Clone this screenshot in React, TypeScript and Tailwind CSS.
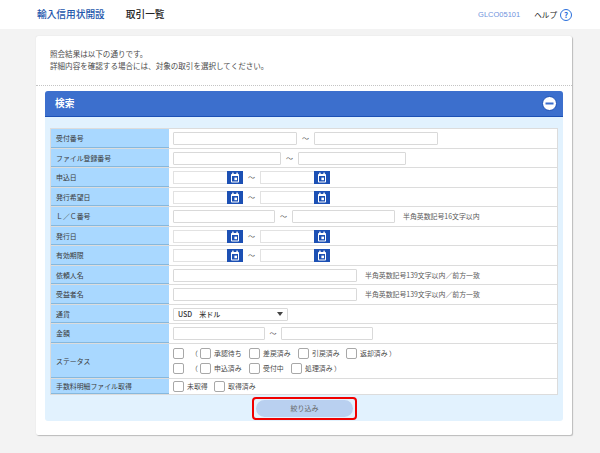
import React from "react";

const font = { fontFamily: '"Noto Sans CJK JP", "Noto Sans", sans-serif' };

function CalendarButton() {
  return (
    <span className="flex h-[13px] w-[16px] shrink-0 items-center justify-center bg-[#1c50b4]">
      <svg width="10" height="11" viewBox="0 0 10 11">
        <rect x="1" y="2" width="8" height="8.5" rx="0.8" fill="#fff" />
        <rect x="2.2" y="0.6" width="1.4" height="2.4" fill="#fff" />
        <rect x="6.4" y="0.6" width="1.4" height="2.4" fill="#fff" />
        <rect x="2" y="4" width="6" height="5.5" fill="#1c50b4" />
        <rect x="4.4" y="5.6" width="2.6" height="2.6" fill="#fff" />
      </svg>
    </span>
  );
}

function TextBox({ w }: { w: string }) {
  return <span className={`block h-[13px] shrink-0 rounded-[1px] border border-[#d9d9d9] bg-white ${w}`} />;
}

function Tilde({ w }: { w: string }) {
  return <span className={`shrink-0 text-center text-[7px] leading-none text-[#555] ${w}`}>～</span>;
}

function Note({ children }: { children: React.ReactNode }) {
  return <span className="ml-[8px] whitespace-nowrap text-[6.9px] text-[#5a5a5a]">{children}</span>;
}

function DateRange() {
  return (
    <>
      <span className="flex">
        <span className="block h-[13px] w-[54px] border border-r-0 border-[#e2e2e2] bg-white" />
        <CalendarButton />
      </span>
      <Tilde w="w-[17px]" />
      <span className="flex">
        <span className="block h-[13px] w-[54px] border border-r-0 border-[#e2e2e2] bg-white" />
        <CalendarButton />
      </span>
    </>
  );
}

function Check({ label, w }: { label?: string; w: string }) {
  return (
    <span className={`flex shrink-0 items-center ${w}`}>
      <span className="block h-[11px] w-[11px] shrink-0 rounded-[2px] border border-[#a8a8a8] bg-white" />
      {label && <span className="ml-[3px] whitespace-nowrap text-[6.9px] text-[#4a4a4a]">{label}</span>}
    </span>
  );
}

function Paren() {
  return <span className="w-[9px] shrink-0 text-[6.9px] text-[#4a4a4a]">（</span>;
}

function Row({
  label,
  h = "h-[20px]",
  children,
}: {
  label: string;
  h?: string;
  children: React.ReactNode;
}) {
  return (
    <div className={`flex border-b border-[#dcdcdc] last:border-b-0 ${h}`}>
      <div className="flex w-[118px] shrink-0 items-center whitespace-nowrap bg-[#a9d8ff] pl-[5px] text-[6.9px] text-[#3a3a3a] shadow-[inset_0_-1px_0_#86b8dd]">
        {label}
      </div>
      <div className="flex flex-1 items-center bg-white pl-[4px]">{children}</div>
    </div>
  );
}

export default function App() {
  return (
    <div className="h-[453px] w-[600px] overflow-hidden bg-[#f3f3f3]" style={font}>
      <div className="flex h-[29px] items-center bg-white pl-[37px] pr-[28px]">
        <h1 className="text-[9.7px] font-medium text-[#2457ac]">輸入信用状開設</h1>
        <p className="ml-[21px] text-[9.7px] font-medium text-[#222]">取引一覧</p>
        <span className="ml-auto text-[7.5px] text-[#6f93dd]" style={{ fontFamily: '"Liberation Sans", sans-serif' }}>
          GLCO05101
        </span>
        <span className="ml-[14px] text-[7.6px] text-[#222]">ヘルプ</span>
        <span className="ml-[3px] flex h-[12px] w-[12px] items-center justify-center rounded-full border border-[#2a6fdc] text-[8px] font-bold leading-none text-[#2a6fdc]">
          ?
        </span>
      </div>

      <div className="ml-[36px] mt-[7px] h-[399px] w-[536px] rounded-[2px] bg-white shadow-[1px_1px_1px_#bbb,0_0_1px_#ccc]">
        <div className="h-[50px] border-b border-dotted border-[#c4c4c4] pl-[14px] pt-[12px] text-[7.55px] leading-[12px] text-[#4a4a4a]">
          <p>照会結果は以下の通りです。</p>
          <p>詳細内容を確認する場合には、対象の取引を選択してください。</p>
        </div>

        <div className="ml-[9px] mt-[5px] h-[330px] w-[518px] rounded-[3px] bg-[#e2f2fe]">
          <div className="flex h-[26px] items-center justify-between rounded-t-[3px] border-b border-[#1c50b4] bg-[#3c6fcd] pl-[10px] pr-[6px]">
            <span className="text-[9.7px] font-bold text-white">検索</span>
            <svg width="15" height="15" viewBox="0 0 15 15">
              <circle cx="7.5" cy="7.5" r="7" fill="#fff" stroke="#1c50b4" />
              <rect x="3.5" y="6.5" width="8" height="2" fill="#3c6fcd" />
            </svg>
          </div>

          <div className="mx-[5px] mt-[11px] w-[508px] border border-[#dcdcdc] bg-white">
            <Row label="受付番号">
              <TextBox w="w-[124px]" />
              <Tilde w="w-[17px]" />
              <TextBox w="w-[124px]" />
            </Row>
            <Row label="ファイル登録番号" h="h-[19px]">
              <TextBox w="w-[108px]" />
              <Tilde w="w-[17px]" />
              <TextBox w="w-[108px]" />
            </Row>
            <Row label="申込日">
              <DateRange />
            </Row>
            <Row label="発行希望日" h="h-[19px]">
              <DateRange />
            </Row>
            <Row label="Ｌ／Ｃ番号">
              <TextBox w="w-[102px]" />
              <Tilde w="w-[17px]" />
              <TextBox w="w-[103px]" />
              <Note>半角英数記号16文字以内</Note>
            </Row>
            <Row label="発行日" h="h-[19px]">
              <DateRange />
            </Row>
            <Row label="有効期限">
              <DateRange />
            </Row>
            <Row label="依頼人名" h="h-[19px]">
              <TextBox w="w-[184px]" />
              <Note>半角英数記号139文字以内／前方一致</Note>
            </Row>
            <Row label="受益者名">
              <TextBox w="w-[184px]" />
              <Note>半角英数記号139文字以内／前方一致</Note>
            </Row>
            <Row label="通貨" h="h-[19px]">
              <span className="flex h-[13px] w-[115px] items-center justify-between rounded-[1px] border border-[#d9d9d9] bg-white pl-[4px] pr-[4px] text-[7px] font-medium text-[#333]">
                <span>USD　米ドル</span>
                <svg width="6" height="4" viewBox="0 0 6 4">
                  <path d="M0 0h6L3 4z" fill="#444" />
                </svg>
              </span>
            </Row>
            <Row label="金額">
              <TextBox w="w-[92px]" />
              <Tilde w="w-[16px]" />
              <TextBox w="w-[92px]" />
            </Row>
            <Row label="ステータス" h="h-[35px]">
              <div className="flex flex-col gap-[4px]">
                <div className="flex h-[11px] items-center">
                  <Check w="w-[18px]" />
                  <Paren />
                  <Check label="承認待ち" w="w-[49px]" />
                  <Check label="差戻済み" w="w-[49px]" />
                  <Check label="引戻済み" w="w-[48px]" />
                  <Check label="返却済み ）" w="w-[48px]" />
                </div>
                <div className="flex h-[11px] items-center">
                  <Check w="w-[18px]" />
                  <Paren />
                  <Check label="申込済み" w="w-[49px]" />
                  <Check label="受付中" w="w-[42px]" />
                  <Check label="処理済み ）" w="w-[48px]" />
                </div>
              </div>
            </Row>
            <Row label="手数料明細ファイル取得" h="h-[15px]">
              <Check label="未取得" w="w-[41px]" />
              <Check label="取得済み" w="w-[48px]" />
            </Row>
          </div>

          <div className="flex justify-center pt-[2px]">
            <div className="ml-[1px] rounded-[4px] border-[2px] border-[#f00000] px-[2px] py-[1px]">
              <button className="block h-[17px] w-[97px] rounded-full bg-[#b9d0f0] text-[7px] text-[#666]">
                絞り込み
              </button>
            </div>
          </div>
        </div>
      </div>
    </div>
  );
}
